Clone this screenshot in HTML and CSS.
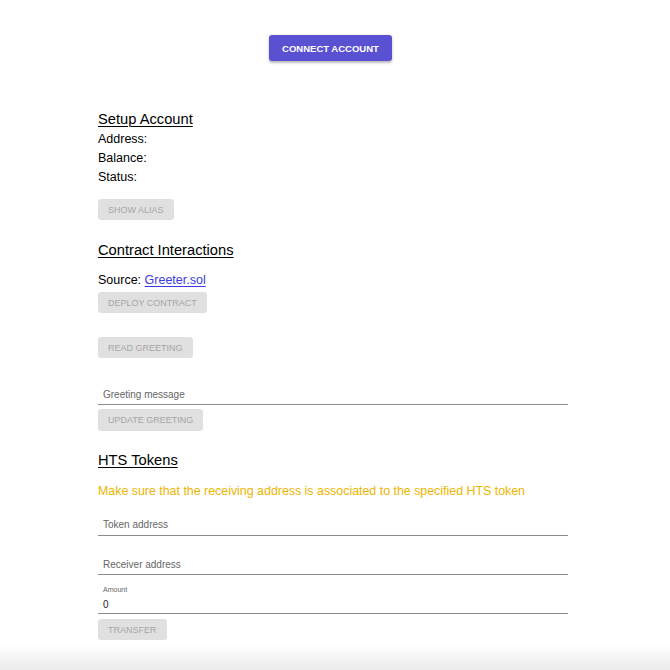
FILE: index.html
```html
<!DOCTYPE html>
<html>
<head>
<meta charset="utf-8">
<link rel="stylesheet" href="styles.css">
</head>
<body>
<div class="top">
  <button class="connect">CONNECT ACCOUNT</button>
</div>
<main class="content">
  <h2 class="heading h-setup">Setup Account</h2>
  <div class="info">Address:</div>
  <div class="info">Balance:</div>
  <div class="info">Status:</div>
  <button class="btn b-alias">SHOW ALIAS</button>

  <h2 class="heading h-contract">Contract Interactions</h2>
  <div class="info source">Source: <a href="#" class="link">Greeter.sol</a></div>
  <button class="btn b-deploy">DEPLOY CONTRACT</button>
  <button class="btn b-read">READ GREETING</button>
  <div class="field f-greet"><span class="placeholder">Greeting message</span></div>
  <button class="btn b-update">UPDATE GREETING</button>

  <h2 class="heading h-hts">HTS Tokens</h2>
  <div class="warn">Make sure that the receiving address is associated to the specified HTS token</div>
  <div class="field f-token"><span class="placeholder">Token address</span></div>
  <div class="field f-recv"><span class="placeholder">Receiver address</span></div>
  <div class="field f-amount">
    <span class="small-label">Amount</span>
    <span class="value">0</span>
  </div>
  <button class="btn b-transfer">TRANSFER</button>
</main>
<div class="bottom-fade"></div>
</body>
</html>
```

FILE: styles.css
```css
html, body {
  margin: 0;
  padding: 0;
  background: #ffffff;
  font-family: "Liberation Sans", Arial, sans-serif;
  color: #000;
}

.top {
  display: flex;
  justify-content: center;
  padding-top: 35px;
}

.connect {
  height: 26px;
  width: 123px;
  margin-left: -9px;
  border: none;
  border-radius: 3px;
  background: #5a50d2;
  color: #fff;
  font-family: "Liberation Sans", Arial, sans-serif;
  font-size: 9.5px;
  font-weight: 700;
  padding: 0;
  box-shadow: 0 2px 2px rgba(0,0,0,0.2), 0 1px 4px rgba(0,0,0,0.12);
}

.content {
  width: 470px;
  margin-left: 98px;
  display: flex;
  flex-direction: column;
  align-items: flex-start;
}

.heading {
  margin: 0;
  font-size: 14.7px;
  font-weight: 400;
  line-height: 18px;
  text-decoration: underline;
  text-underline-offset: 2px;
  text-decoration-thickness: 1px;
}

.h-setup { margin-top: 49px; margin-bottom: 2px; }
.h-contract { margin-top: 21px; }
.h-hts { margin-top: 20px; }

.info {
  font-size: 12.5px;
  line-height: 19px;
}

.source { margin-top: 12px; }

.link {
  color: #3b3be6;
  text-decoration: underline;
  text-underline-offset: 2px;
}

.btn {
  height: 21px;
  border: none;
  border-radius: 3px;
  background: #e0e0e0;
  color: #a6a6a6;
  font-family: "Liberation Sans", Arial, sans-serif;
  font-size: 9px;
  letter-spacing: 0;
  padding: 0 10px;
}

.b-alias { margin-top: 12px; }
.b-deploy { margin-top: 2px; }
.b-read { margin-top: 24px; }
.b-update { margin-top: 4px; height: 22px; }
.b-transfer { margin-top: 5px; }

.field {
  width: 470px;
  box-sizing: border-box;
  border-bottom: 1px solid #8c8c8c;
  padding-left: 5px;
  display: flex;
  flex-direction: column;
}

.placeholder {
  font-size: 10px;
  color: #666;
  line-height: 12px;
}

.f-greet { margin-top: 31px; padding-bottom: 3px; }
.f-token { margin-top: 20px; padding-bottom: 4px; }
.f-recv { margin-top: 23px; padding-bottom: 3px; }

.f-amount { margin-top: 10px; padding-bottom: 2px; }
.small-label {
  font-size: 7px;
  line-height: 9px;
  color: #666;
}
.value {
  font-size: 10px;
  line-height: 12px;
  margin-top: 5px;
  color: #222;
}

.warn {
  margin-top: 14px;
  font-size: 12.4px;
  line-height: 16px;
  color: #ecb500;
}

.bottom-fade {
  position: fixed;
  left: 0;
  right: 0;
  bottom: 0;
  height: 26px;
  background: linear-gradient(to bottom, rgba(236,236,236,0), #ebebeb);
  pointer-events: none;
}
```
